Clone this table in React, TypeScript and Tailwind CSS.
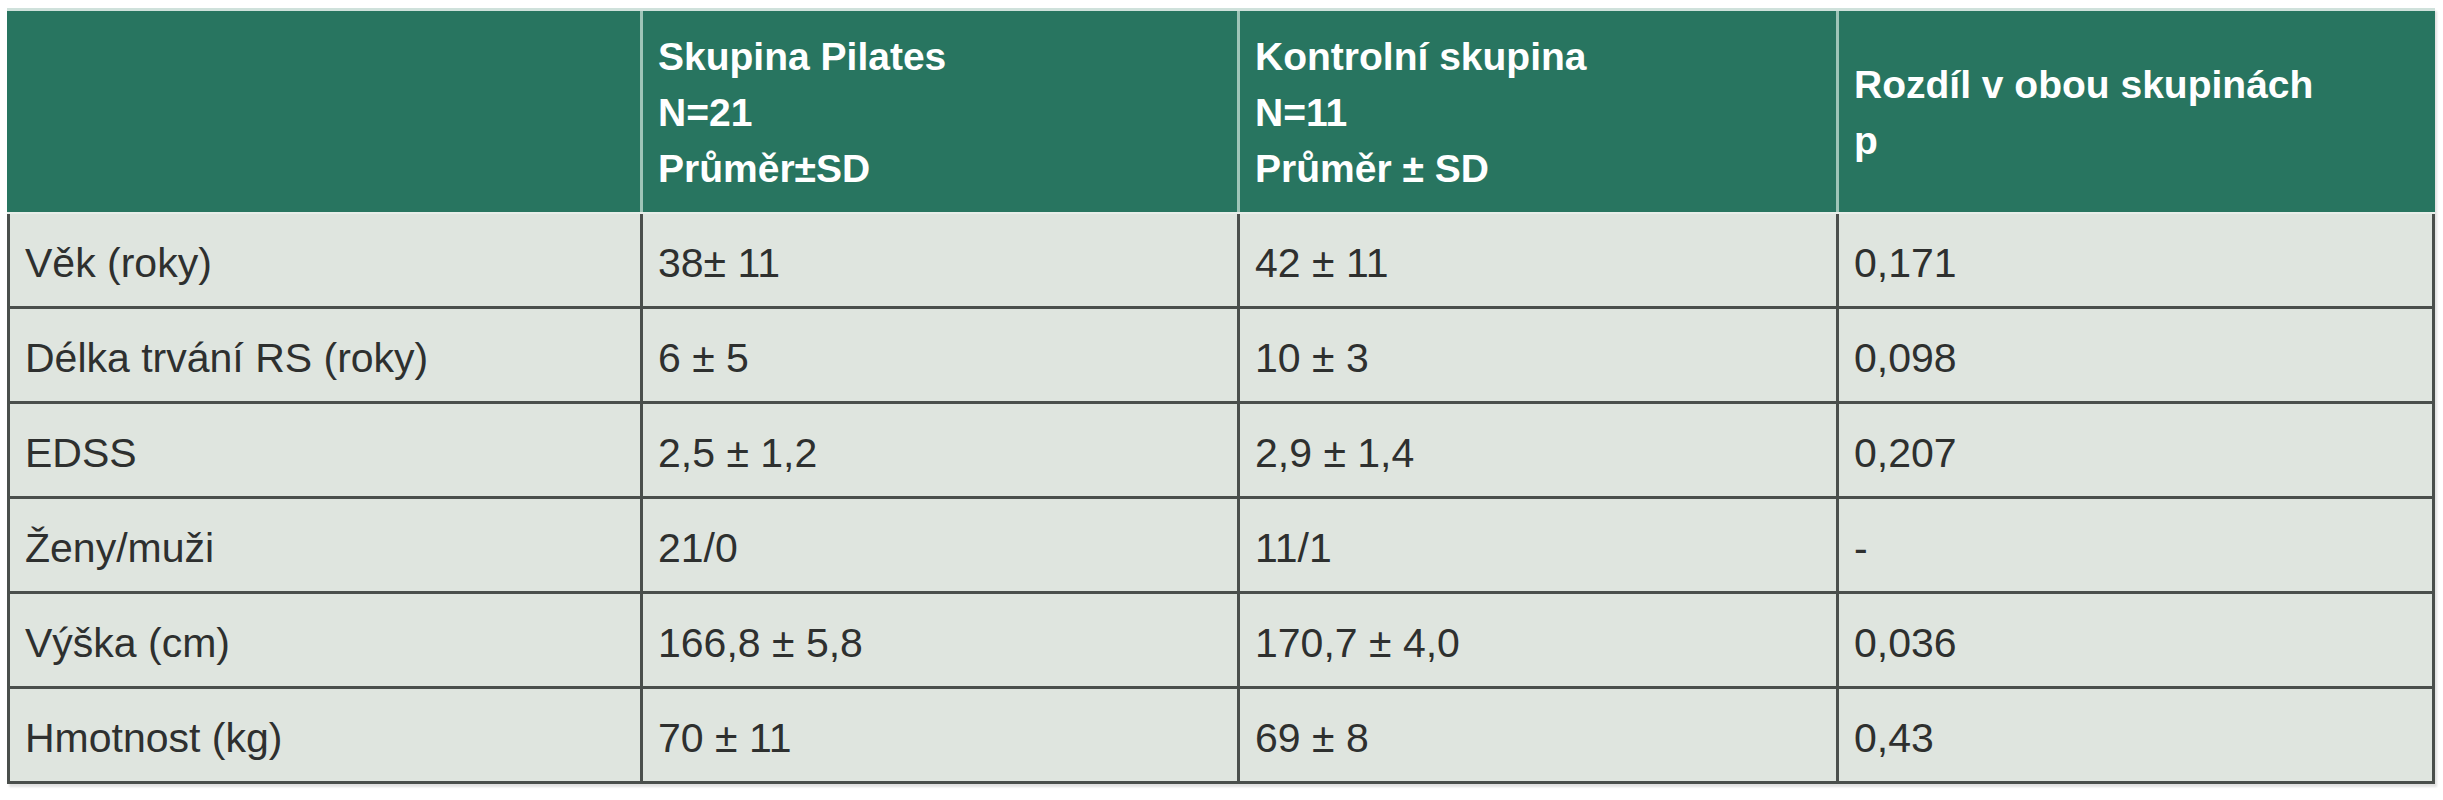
const header = [
  [],
  ["Skupina Pilates", "N=21", "Průměr±SD"],
  ["Kontrolní skupina", "N=11", "Průměr ± SD"],
  ["Rozdíl v obou skupinách", "p"],
];

const rows = [
  ["Věk (roky)", "38± 11", "42 ± 11", "0,171"],
  ["Délka trvání RS (roky)", "6 ± 5", "10 ± 3", "0,098"],
  ["EDSS", "2,5 ± 1,2", "2,9 ± 1,4", "0,207"],
  ["Ženy/muži", "21/0", "11/1", "-"],
  ["Výška (cm)", "166,8 ± 5,8", "170,7 ± 4,0", "0,036"],
  ["Hmotnost (kg)", "70 ± 11", "69 ± 8", "0,43"],
];

const cols = "grid grid-cols-[633px_597px_599px_596px]";

export default function App() {
  return (
    <div
      className="w-[2443px] h-[800px] bg-white pt-[8px] pl-[7px]"
      style={{ fontFamily: '"Liberation Sans", Arial, sans-serif' }}
    >
      <div className="w-[2428px] shadow-[2px_3px_2px_rgba(0,0,0,0.12)]">
        {/* Header */}
        <div className={`${cols} h-[206px] bg-[#287560] border-t-[3px] border-[#cfe1db] border-b-[2px] border-b-[#e8eee9]`}>
          {header.map((lines, i) => (
            <div
              key={i}
              className={`flex flex-col justify-center pl-[15px] pt-[3px] text-[39px] leading-[56px] font-bold text-white ${
                i > 0 ? "border-l-[3px] border-[#9fc5b8]" : ""
              }`}
            >
              {lines.map((l) => (
                <span key={l}>{l}</span>
              ))}
            </div>
          ))}
        </div>

        {/* Body */}
        {rows.map((r) => (
          <div
            key={r[0]}
            className={`${cols} h-[95px] bg-[#dfe5df] border-b-[3px] border-[#4a4f4c] border-r-[3px]`}
          >
            {r.map((c, i) => (
              <div
                key={i}
                className="flex items-center pl-[15px] pt-[8px] border-l-[3px] border-[#4a4f4c] text-[41px] text-[#2e302f]"
              >
                {c}
              </div>
            ))}
          </div>
        ))}
      </div>
    </div>
  );
}
